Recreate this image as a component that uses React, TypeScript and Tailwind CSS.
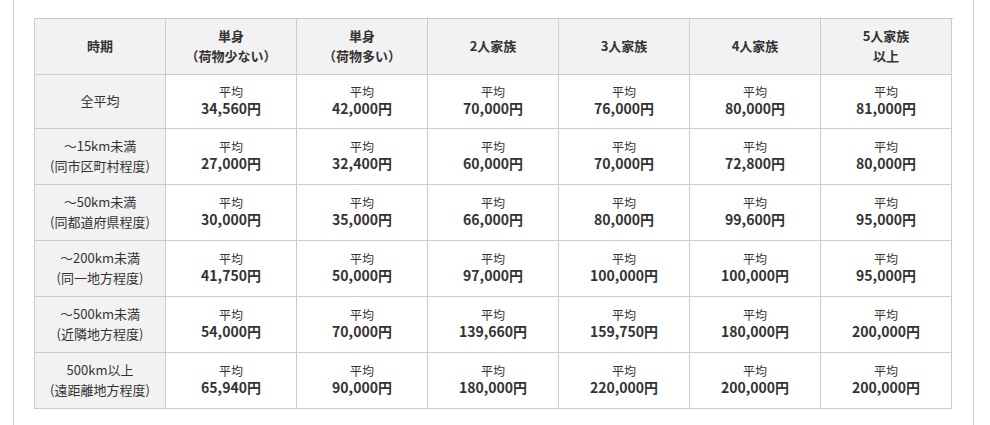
import React from "react";

const headers: string[][] = [
  ["時期"],
  ["単身", "（荷物少ない）"],
  ["単身", "（荷物多い）"],
  ["2人家族"],
  ["3人家族"],
  ["4人家族"],
  ["5人家族", "以上"],
];

const rows: { label: string[]; values: string[] }[] = [
  { label: ["全平均"], values: ["34,560円", "42,000円", "70,000円", "76,000円", "80,000円", "81,000円"] },
  { label: ["～15km未満", "(同市区町村程度)"], values: ["27,000円", "32,400円", "60,000円", "70,000円", "72,800円", "80,000円"] },
  { label: ["～50km未満", "(同都道府県程度)"], values: ["30,000円", "35,000円", "66,000円", "80,000円", "99,600円", "95,000円"] },
  { label: ["～200km未満", "(同一地方程度)"], values: ["41,750円", "50,000円", "97,000円", "100,000円", "100,000円", "95,000円"] },
  { label: ["～500km未満", "(近隣地方程度)"], values: ["54,000円", "70,000円", "139,660円", "159,750円", "180,000円", "200,000円"] },
  { label: ["500km以上", "(遠距離地方程度)"], values: ["65,940円", "90,000円", "180,000円", "220,000円", "200,000円", "200,000円"] },
];

export default function App() {
  return (
    <div
      className="w-[990px] h-[425px] bg-white text-[#333]"
      style={{ fontFamily: '"Noto Sans CJK JP", "Noto Sans", sans-serif' }}
    >
      <div className="ml-[13px] w-[961px] h-[425px] border-x border-[#cfcfcf] px-[20px] pt-[18px]">
        <div className="grid grid-cols-[repeat(7,131px)] border-l border-t border-[#cccccc]">
          {headers.map((h, i) => (
            <div
              key={i}
              className="h-[56px] border-r border-b border-[#cccccc] bg-[#f2f2f2] flex flex-col items-center justify-center pb-[2px] text-[13px] font-bold leading-[20px]"
            >
              {h.map((t, j) => (
                <span key={j}>{t}</span>
              ))}
            </div>
          ))}
          {rows.map((r, ri) => (
            <React.Fragment key={ri}>
              <div
                className={`${ri === 0 ? "h-[54px]" : "h-[56px]"} border-r border-b border-[#cccccc] bg-[#f2f2f2] flex flex-col items-center justify-center pb-[2px] text-[13px] leading-[20px]`}
              >
                {r.label.map((t, j) => (
                  <span key={j}>{t}</span>
                ))}
              </div>
              {r.values.map((v, vi) => (
                <div
                  key={vi}
                  className={`${ri === 0 ? "h-[54px]" : "h-[56px]"} border-r border-b border-[#cccccc] bg-white flex flex-col items-center justify-center pb-[4px]`}
                >
                  <span className="text-[12px] leading-[17px]">平均</span>
                  <span className="text-[14px] leading-[17px] font-bold">{v}</span>
                </div>
              ))}
            </React.Fragment>
          ))}
        </div>
      </div>
    </div>
  );
}
